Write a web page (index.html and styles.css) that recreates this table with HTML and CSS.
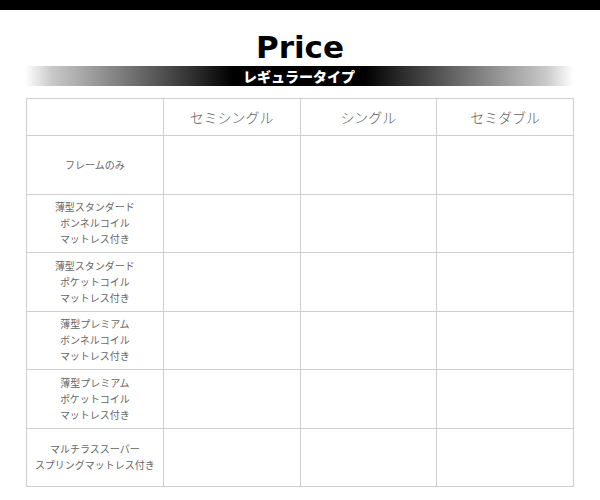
FILE: index.html
```html
<!DOCTYPE html>
<html lang="ja">
<head>
<meta charset="utf-8">
<link rel="stylesheet" href="styles.css">
</head>
<body>
<div class="topbar"></div>
<h1 class="title">Price</h1>
<div class="band"><span class="band-text">レギュラータイプ</span></div>
<table class="price">
  <thead>
    <tr>
      <th class="label"></th>
      <th>セミシングル</th>
      <th>シングル</th>
      <th>セミダブル</th>
    </tr>
  </thead>
  <tbody>
    <tr><td class="label">フレームのみ</td><td></td><td></td><td></td></tr>
    <tr><td class="label">薄型スタンダード<br>ボンネルコイル<br>マットレス付き</td><td></td><td></td><td></td></tr>
    <tr><td class="label">薄型スタンダード<br>ポケットコイル<br>マットレス付き</td><td></td><td></td><td></td></tr>
    <tr><td class="label">薄型プレミアム<br>ボンネルコイル<br>マットレス付き</td><td></td><td></td><td></td></tr>
    <tr><td class="label">薄型プレミアム<br>ポケットコイル<br>マットレス付き</td><td></td><td></td><td></td></tr>
    <tr><td class="label">マルチラススーパー<br>スプリングマットレス付き</td><td></td><td></td><td></td></tr>
  </tbody>
</table>
</body>
</html>
```
FILE: styles.css
```css
html, body {
  margin: 0;
  padding: 0;
  background: #fff;
}
body {
  width: 600px;
  font-family: "Noto Sans CJK JP", "Noto Sans", sans-serif;
}
.topbar {
  height: 10px;
  background: #000;
}
.title {
  margin: 19px 0 0;
  text-align: center;
  font-family: "DejaVu Sans", sans-serif;
  font-weight: bold;
  font-size: 31px;
  line-height: 36px;
  color: #000;
  letter-spacing: 0;
}
.band {
  margin: 1px 27px 0 25px;
  height: 20px;
  display: flex;
  justify-content: center;
  align-items: center;
  background: linear-gradient(to right, #fff 0%, #c8c8c8 5%, #333 30%, #000 38%, #000 62%, #333 70%, #c8c8c8 95%, #fff 100%);
}
.band-text {
  color: #fff;
  font-weight: 900;
  font-size: 14px;
  line-height: 20px;
}
.price {
  margin: 12px 0 0 26px;
  width: 548px;
  border-collapse: collapse;
  table-layout: fixed;
}
.price th, .price td {
  border: 1px solid #cfcfcf;
  padding: 0;
  text-align: center;
  vertical-align: middle;
  color: #666;
}
.price th {
  height: 36px;
  font-weight: 300;
  font-size: 14px;
  color: #606060;
}
.price td {
  height: 57.5px;
  font-size: 10px;
  line-height: 16px;
}
```
